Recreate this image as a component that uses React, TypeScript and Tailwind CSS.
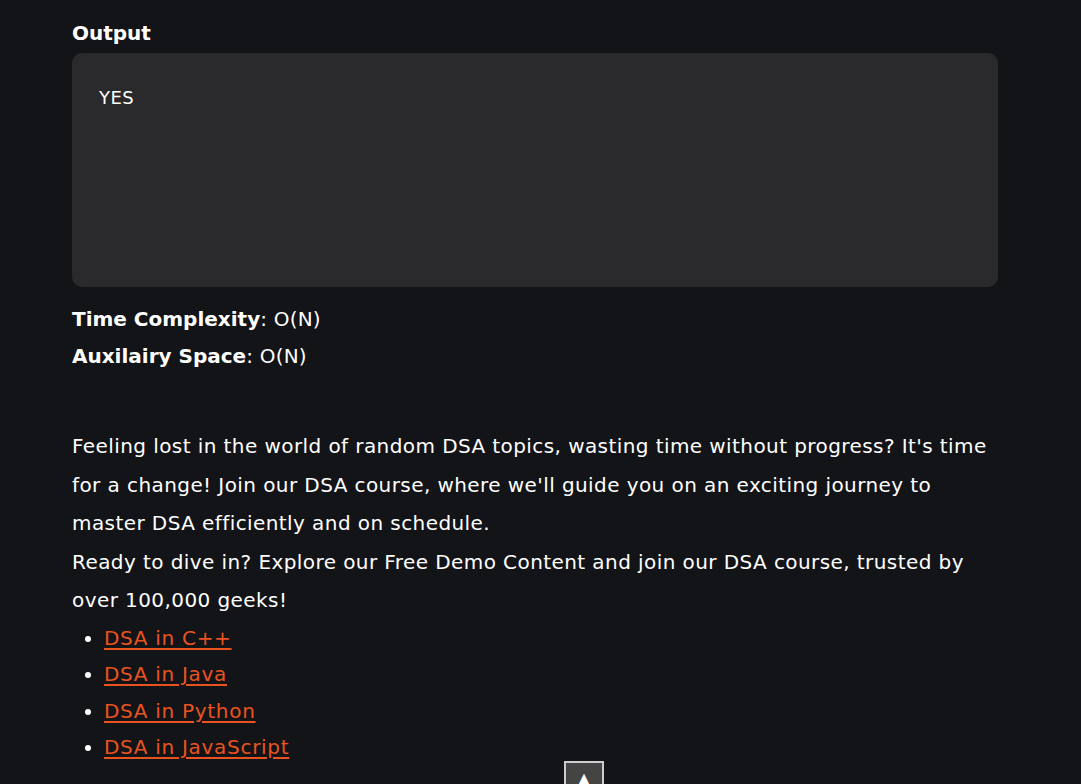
import React from "react";

const links = ["DSA in C++", "DSA in Java", "DSA in Python", "DSA in JavaScript"];

const para1 = [
  "Feeling lost in the world of random DSA topics, wasting time without progress? It's time",
  "for a change! Join our DSA course, where we'll guide you on an exciting journey to",
  "master DSA efficiently and on schedule.",
];
const para2 = [
  "Ready to dive in? Explore our Free Demo Content and join our DSA course, trusted by",
  "over 100,000 geeks!",
];

const App = () => {
  return (
    <div
      className="relative h-[784px] overflow-hidden bg-[#131417] text-white"
      style={{ fontFamily: "'DejaVu Sans', sans-serif" }}
    >
      <div className="pl-[72px] w-[998px] pt-[18px]">
        <h3 className="font-bold text-[20px] leading-[30px]">Output</h3>
        <div className="mt-[5px] h-[234px] rounded-[10px] bg-[#2a2a2c] px-[27px] py-[32px]">
          <pre
            className="text-[18px] leading-[26px] tracking-[0.5px]"
            style={{ fontFamily: "'DejaVu Sans', sans-serif" }}
          >
            YES
          </pre>
        </div>
        <p className="mt-[14px] text-[20px] leading-[37px] tracking-[0.2px]">
          <b className="tracking-normal">Time Complexity</b>: O(N)
          <br />
          <b className="tracking-normal">Auxilairy Space</b>: O(N)
        </p>
        <div className="mt-[52px] text-[20px] leading-[38.5px] tracking-[0.42px]">
          {para1.map((l) => (
            <span key={l} className="block whitespace-nowrap">
              {l}
            </span>
          ))}
          {para2.map((l) => (
            <span key={l} className="block whitespace-nowrap">
              {l}
            </span>
          ))}
        </div>
        <ul className="list-disc pl-[32px] text-[20px] leading-[36.5px] tracking-[0.7px]">
          {links.map((l) => (
            <li key={l}>
              <a href="#" className="text-[#e9531f] underline underline-offset-[3px]">
                {l}
              </a>
            </li>
          ))}
        </ul>
      </div>
      <button className="absolute left-[564px] top-[761px] w-[40px] h-[40px] bg-[#444] border-2 border-[#ccc] text-white text-[22px] leading-[34px]">
        ▲
      </button>
    </div>
  );
};

export default App;
